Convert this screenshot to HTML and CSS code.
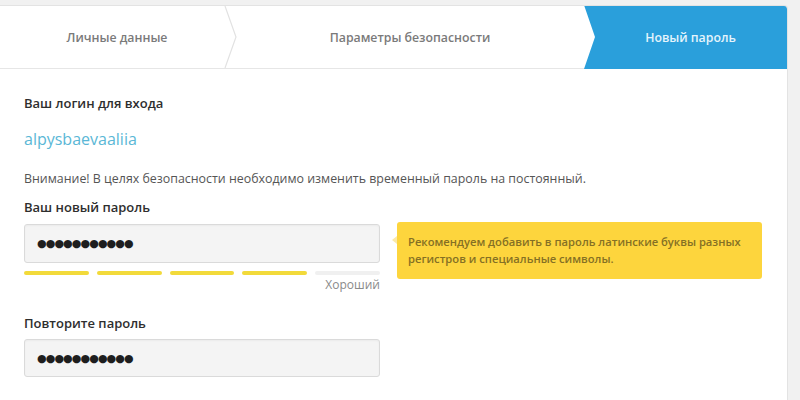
FILE: index.html
```html
<!DOCTYPE html>
<html lang="ru">
<head>
<meta charset="utf-8">
<title>Новый пароль</title>
<link rel="stylesheet" href="styles.css">
</head>
<body>
<div class="card">
  <div class="tabs">
    <div class="tab tab-first">Личные данные</div>
    <svg class="chev" width="14" height="62" viewBox="0 0 14 62"><polyline points="1,0 12,31 1,62" fill="none" stroke="#e2e2e2" stroke-width="1.2"/></svg>
    <div class="tab tab-mid">Параметры безопасности</div>
    <div class="tab tab-active">Новый пароль</div>
  </div>
  <div class="content">
    <div class="label">Ваш логин для входа</div>
    <div class="login">alpysbaevaaliia</div>
    <div class="warning">Внимание! В целях безопасности необходимо изменить временный пароль на постоянный.</div>
    <div class="label label-pw">Ваш новый пароль</div>
    <div class="pw-row">
      <div class="field-col">
        <div class="input"><span class="dots">●●●●●●●●●●●</span></div>
        <div class="strength">
          <span class="seg on"></span><span class="seg on"></span><span class="seg on"></span><span class="seg on"></span><span class="seg"></span>
        </div>
        <div class="strength-text">Хороший</div>
      </div>
      <div class="hint">Рекомендуем добавить в пароль латинские буквы разных регистров и специальные символы.</div>
    </div>
    <div class="label label-repeat">Повторите пароль</div>
    <div class="input input-repeat"><span class="dots">●●●●●●●●●●●</span></div>
  </div>
</div>
</body>
</html>
```
FILE: styles.css
```css
html, body {
  margin: 0;
  padding: 0;
}
body {
  background: #f1f1f1;
  font-family: "Open Sans", "Noto Sans", sans-serif;
  color: #333;
  height: 400px;
  overflow: hidden;
}
.card {
  margin-top: 5px;
  width: 788px;
  height: 395px;
  background: #fff;
  border: 1px solid #e3e3e3;
  border-left: none;
  border-bottom: none;
  border-radius: 0 4px 0 0;
  box-sizing: border-box;
  overflow: hidden;
}
.tabs {
  display: flex;
  height: 62px;
  border-bottom: 1px solid #e6e6e6;
}
.tab {
  display: flex;
  align-items: center;
  justify-content: center;
  font-size: 12.3px;
  font-weight: 600;
  color: #7a7a7a;
  box-sizing: border-box;
}
.tab-first {
  width: 224px;
  padding-left: 10px;
}
.chev {
  flex: 0 0 14px;
}
.tab-mid {
  flex: 1;
  padding-right: 2px;
}
.tab-active {
  width: 203px;
  margin-top: -1px;
  margin-bottom: -1px;
  padding-left: 10px;
  background: #2a9fdb;
  color: #e4f4fc;
  border-radius: 0 4px 0 0;
  clip-path: polygon(0 0, 100% 0, 100% 100%, 0 100%, 11px 50%);
}
.content {
  padding: 24px 0 0 24px;
}
.label {
  font-size: 13px;
  font-weight: 600;
  line-height: 20px;
  color: #2e2e2e;
}
.login {
  margin-top: 15px;
  font-size: 16px;
  line-height: 22px;
  color: #5ab7d6;
}
.warning {
  margin-top: 20px;
  font-size: 12.4px;
  line-height: 18px;
  color: #555;
}
.label-pw {
  margin-top: 9px;
}
.pw-row {
  display: flex;
  align-items: flex-start;
  margin-top: 7px;
}
.field-col {
  width: 356px;
}
.input {
  width: 356px;
  height: 39px;
  box-sizing: border-box;
  background: #f4f4f4;
  border: 1px solid #dadada;
  border-radius: 3px;
  box-shadow: inset 0 1px 2px rgba(0,0,0,0.04);
  display: flex;
  align-items: center;
  padding-left: 12px;
}
.dots {
  font-family: "DejaVu Sans", sans-serif;
  font-size: 11px;
  letter-spacing: -0.9px;
  color: #1e1e1e;
}
.strength {
  display: flex;
  gap: 8px;
  margin-top: 8px;
}
.seg {
  flex: 1;
  height: 4px;
  border-radius: 2px;
  background: #f0f0f0;
}
.seg.on {
  background: #f2da3a;
}
.strength-text {
  margin-top: 1px;
  text-align: right;
  font-size: 12px;
  line-height: 18px;
  color: #8a8a8a;
}
.hint {
  position: relative;
  margin-left: 17px;
  margin-top: -2px;
  width: 365px;
  box-sizing: border-box;
  padding: 11px 12px 12px 11px;
  background: #fdd53d;
  border-radius: 3px;
  font-size: 11.2px;
  font-weight: 600;
  line-height: 17px;
  color: #857024;
}
.hint::before {
  content: "";
  position: absolute;
  left: -5px;
  top: 14px;
  border-top: 4px solid transparent;
  border-bottom: 4px solid transparent;
  border-right: 5px solid #fbe9a6;
}
.label-repeat {
  margin-top: 19px;
}
.input-repeat {
  margin-top: 6px;
  height: 38px;
}
```
